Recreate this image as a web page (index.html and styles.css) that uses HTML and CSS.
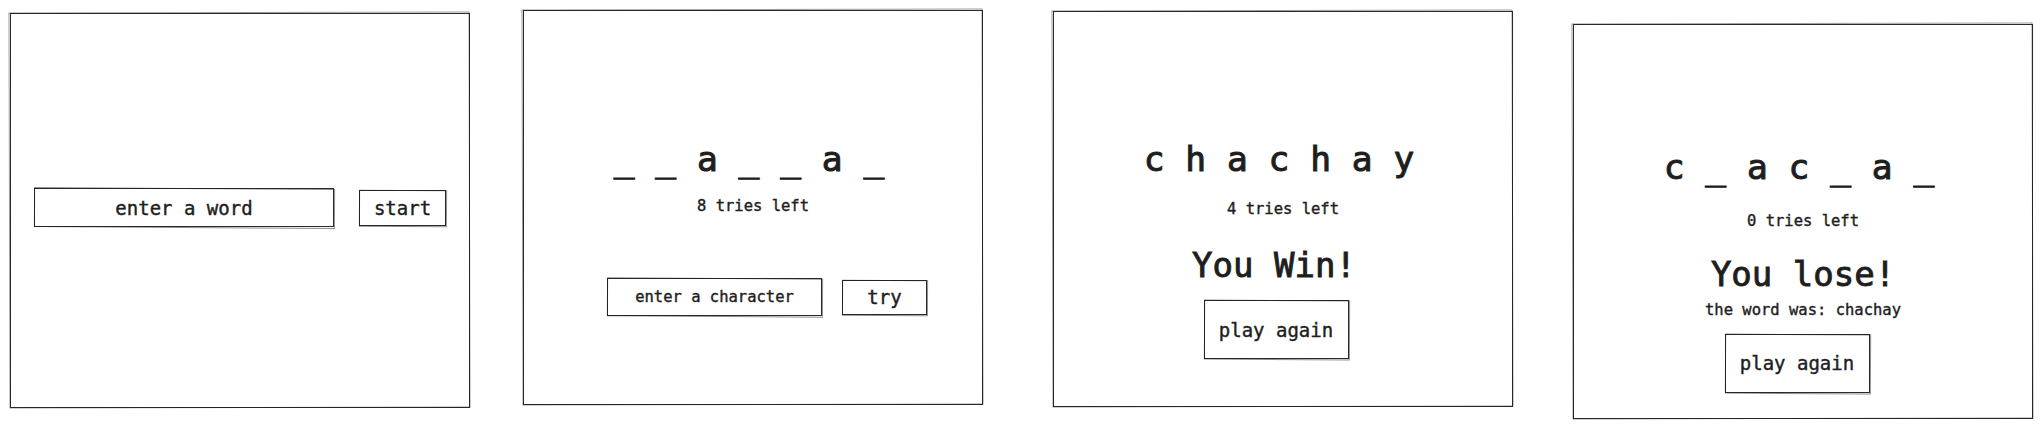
FILE: index.html
```html
<!DOCTYPE html>
<html>
<head>
<meta charset="utf-8">
<link rel="stylesheet" href="styles.css">
</head>
<body>
<div class="board">
  <section class="panel p1">
    <div class="row row-start">
      <div class="sk field field-word">enter a word</div>
      <button class="sk btn btn-start">start</button>
    </div>
  </section>

  <section class="panel p2">
    <div class="word">_ _ a _ _ a _</div>
    <div class="tries tries-2">8 tries left</div>
    <div class="row row-try">
      <div class="sk field field-char">enter a character</div>
      <button class="sk btn btn-try">try</button>
    </div>
  </section>

  <section class="panel p3">
    <div class="word">c h a c h a y</div>
    <div class="tries tries-3">4 tries left</div>
    <div class="result result-win">You Win!</div>
    <button class="sk btn btn-again again-win">play again</button>
  </section>

  <section class="panel p4">
    <div class="word">c _ a c _ a _</div>
    <div class="tries tries-4">0 tries left</div>
    <div class="result result-lose">You lose!</div>
    <div class="reveal">the word was: chachay</div>
    <button class="sk btn btn-again again-lose">play again</button>
  </section>
</div>
</body>
</html>
```

FILE: styles.css
```css
html, body {
  margin: 0;
  padding: 0;
  background: #ffffff;
}

body {
  font-family: "DejaVu Sans Mono", "Liberation Mono", monospace;
  color: #1e1e1e;
  -webkit-text-stroke: 0.4px #1e1e1e;
}

.board {
  display: flex;
  align-items: flex-start;
  padding-left: 10px;
  width: 2043px;
  height: 429px;
  box-sizing: border-box;
}

.panel {
  position: relative;
  box-sizing: border-box;
  width: 460px;
  height: 395px;
  border: 1.5px solid #2a2a2a;
  display: flex;
  flex-direction: column;
  align-items: center;
  flex-shrink: 0;
}

.panel::after {
  content: "";
  position: absolute;
  inset: -2px -1px -1px -2px;
  border: 1px solid rgba(30, 30, 30, 0.45);
  transform: rotate(-0.15deg);
  pointer-events: none;
}

.p1 { margin-top: 13px; padding-top: 174px; }
.p2 { margin-top: 10px; margin-left: 53px; padding-top: 131px; }
.p3 { margin-top: 11px; margin-left: 70px; padding-top: 130px; height: 396px; }
.p4 { margin-top: 24px; margin-left: 60px; padding-top: 125px; }

.sk {
  position: relative;
  box-sizing: border-box;
  border: 1.5px solid #2a2a2a;
  background: #ffffff;
  color: #1e1e1e;
  font-family: "DejaVu Sans Mono", "Liberation Mono", monospace;
  -webkit-text-stroke: 0.4px #1e1e1e;
  display: flex;
  align-items: center;
  justify-content: center;
  padding: 0;
  margin: 0;
}

.sk::after {
  content: "";
  position: absolute;
  inset: -1px -2px -2px -1px;
  border: 1px solid rgba(30, 30, 30, 0.5);
  transform: rotate(0.35deg);
  pointer-events: none;
}

.row {
  display: flex;
  align-items: center;
}

.row-start { gap: 25px; }
.row-try { gap: 20px; margin-top: 64px; margin-left: 28px; }

.field-word {
  width: 300px;
  height: 39px;
  font-size: 19px;
}

.btn-start {
  width: 87px;
  height: 36px;
  font-size: 19px;
}

.field-char {
  width: 215px;
  height: 38px;
  font-size: 15.5px;
}

.btn-try {
  width: 85px;
  height: 35px;
  font-size: 19px;
}

.word {
  font-size: 34.6px;
  line-height: 1;
  white-space: pre;
  margin-left: -8px;
  -webkit-text-stroke: 1px #1e1e1e;
}

.tries {
  font-size: 15.5px;
  line-height: 1;
}

.tries-2 { margin-top: 22px; }
.tries-3 { margin-top: 25px; }
.tries-4 { margin-top: 29px; }

.result {
  font-size: 34px;
  line-height: 1;
  -webkit-text-stroke: 0.9px #1e1e1e;
}

.result-win { margin-top: 31px; margin-left: -18px; }
.result-lose { margin-top: 28px; }

.reveal {
  font-size: 15.5px;
  line-height: 1;
  margin-top: 12px;
}

.btn-again {
  width: 145px;
  height: 59px;
  font-size: 19px;
}

.again-win { margin-top: 18px; margin-left: -14px; }
.again-lose { margin-top: 15px; margin-left: -12px; }
```
